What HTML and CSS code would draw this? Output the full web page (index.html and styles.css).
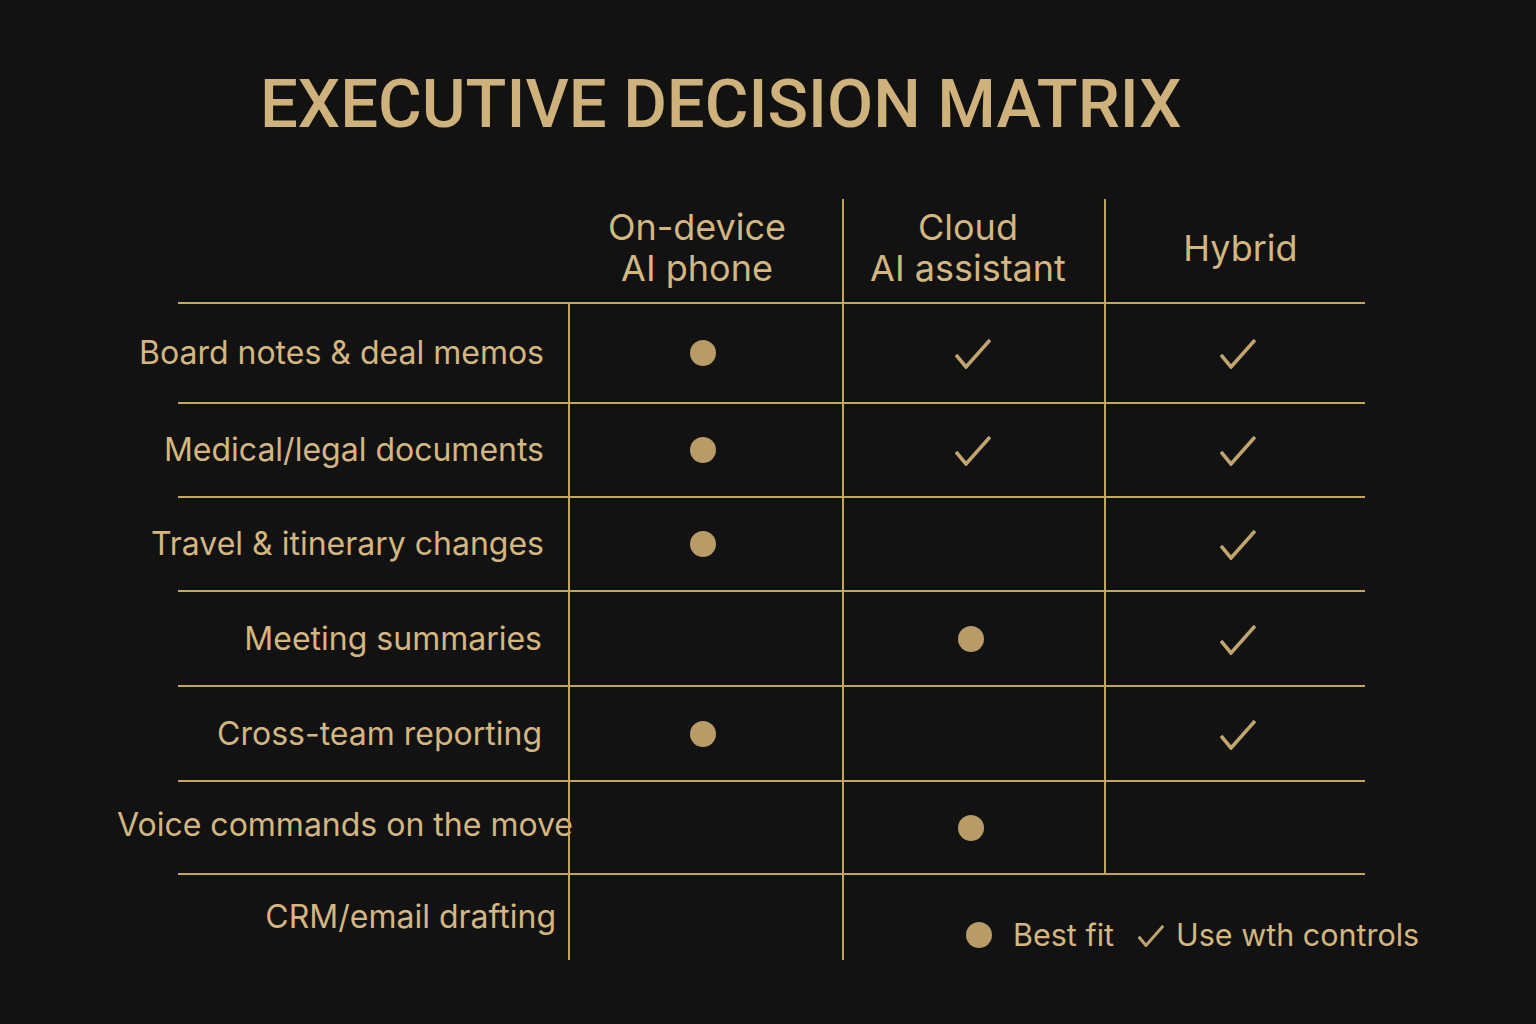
FILE: index.html
```html
<!DOCTYPE html>
<html lang="en">
<head>
<meta charset="utf-8">
<title>Executive Decision Matrix</title>
<link rel="stylesheet" href="styles.css">
</head>
<body>
<main class="page">
  <h1 class="title">EXECUTIVE DECISION MATRIX</h1>

  <section class="matrix">
    <div class="row row--head">
      <div class="cell cell--label"></div>
      <div class="cell cell--head head--one">On-device<br>AI phone</div>
      <div class="cell cell--head cell--line head--two">Cloud<br>AI assistant</div>
      <div class="cell cell--head cell--line head--three">Hybrid</div>
    </div>

    <div class="row row--h100">
      <div class="cell cell--label">Board notes &amp; deal memos</div>
      <div class="cell cell--line"><span class="dot"></span></div>
      <div class="cell cell--line"><svg class="check" viewBox="0 0 36 30"><polyline points="1,16 11,28 35,1"/></svg></div>
      <div class="cell cell--line cell--right"><svg class="check" viewBox="0 0 36 30"><polyline points="1,16 11,28 35,1"/></svg></div>
    </div>

    <div class="row row--h94">
      <div class="cell cell--label">Medical/legal documents</div>
      <div class="cell cell--line"><span class="dot"></span></div>
      <div class="cell cell--line"><svg class="check" viewBox="0 0 36 30"><polyline points="1,16 11,28 35,1"/></svg></div>
      <div class="cell cell--line cell--right"><svg class="check" viewBox="0 0 36 30"><polyline points="1,16 11,28 35,1"/></svg></div>
    </div>

    <div class="row row--h94">
      <div class="cell cell--label">Travel &amp; itinerary changes</div>
      <div class="cell cell--line"><span class="dot"></span></div>
      <div class="cell cell--line"></div>
      <div class="cell cell--line cell--right"><svg class="check" viewBox="0 0 36 30"><polyline points="1,16 11,28 35,1"/></svg></div>
    </div>

    <div class="row row--h95">
      <div class="cell cell--label label--tight">Meeting summaries</div>
      <div class="cell cell--line"></div>
      <div class="cell cell--line"><span class="dot"></span></div>
      <div class="cell cell--line cell--right"><svg class="check" viewBox="0 0 36 30"><polyline points="1,16 11,28 35,1"/></svg></div>
    </div>

    <div class="row row--h95">
      <div class="cell cell--label label--tight">Cross-team reporting</div>
      <div class="cell cell--line"><span class="dot"></span></div>
      <div class="cell cell--line"></div>
      <div class="cell cell--line cell--right"><svg class="check" viewBox="0 0 36 30"><polyline points="1,16 11,28 35,1"/></svg></div>
    </div>

    <div class="row row--h93">
      <div class="cell cell--label label--wide">Voice commands on the move</div>
      <div class="cell cell--line"></div>
      <div class="cell cell--line"><span class="dot"></span></div>
      <div class="cell cell--line"></div>
    </div>

    <div class="row row--last">
      <div class="cell cell--label label--mid">CRM/email drafting</div>
      <div class="cell cell--line"></div>
      <div class="cell cell--line cell--legend">
        <div class="legend">
          <span class="legend-item"><span class="dot dot--legend"></span>Best fit</span>
          <span class="legend-item"><svg class="check check--legend" viewBox="0 0 36 30"><polyline points="1,16 11,28 35,1"/></svg>Use wth controls</span>
        </div>
      </div>
    </div>
  </section>
</main>
</body>
</html>
```

FILE: styles.css
```css
html, body {
  margin: 0;
  padding: 0;
  background: #121212;
}

.page {
  width: 1536px;
  height: 1024px;
  box-sizing: border-box;
  padding-top: 71px;
  background: #121212;
  color: #d3b680;
  font-family: "Inter", "Liberation Sans", sans-serif;
  overflow: hidden;
}

.title {
  margin: 0 0 0 260px;
  font-family: "Roboto", "Liberation Sans", sans-serif;
  font-weight: 500;
  font-size: 67px;
  line-height: 67px;
  height: 67px;
  letter-spacing: 0;
  color: #cfb27b;
  white-space: nowrap;
}

.matrix {
  margin: 61px 0 0 178px;
  width: 1187px;
}

.row {
  display: grid;
  grid-template-columns: 390px 274px 262px 261px;
  border-top: 2px solid #c4a55c;
  box-sizing: border-box;
}

.row--head {
  border-top: none;
  height: 103px;
}

.row--h100 { height: 100px; }
.row--h94 { height: 94px; }
.row--h95 { height: 95px; }
.row--h93 { height: 93px; }
.row--last { height: 87px; }

.cell {
  display: flex;
  align-items: center;
  justify-content: center;
  box-sizing: border-box;
  min-width: 0;
}

.cell--line {
  border-left: 2px solid #c4a55c;
}

.cell--head {
  text-align: center;
  font-size: 36px;
  line-height: 41px;
  padding-bottom: 6px;
}

.head--one { padding-right: 16px; }
.head--two { padding-right: 12px; }
.head--three { padding-left: 10px; padding-bottom: 4px; }

.cell--label {
  justify-content: flex-end;
  padding-right: 24px;
  font-size: 32px;
  line-height: 40px;
  white-space: nowrap;
  overflow: visible;
}

.label--tight { padding-right: 26px; }
.label--wide { padding-right: 0; margin-right: -5px; padding-bottom: 6px; }
.label--mid { padding-right: 12px; padding-bottom: 2px; }

.dot {
  display: block;
  width: 26px;
  height: 26px;
  border-radius: 50%;
  background: #b89b67;
  margin-right: 6px;
}

.check {
  width: 36px;
  height: 30px;
  margin-right: 2px;
  margin-top: 2px;
  fill: none;
  stroke: #c1a46e;
  stroke-width: 3.6;
}

.cell--right .check {
  margin-right: 0;
  margin-left: 5px;
}

.cell--legend {
  grid-column: 3 / span 2;
  align-items: flex-start;
  justify-content: flex-start;
  padding: 40px 0 0 122px;
  overflow: visible;
}

.legend {
  display: flex;
  align-items: center;
  gap: 24px;
  white-space: nowrap;
  font-size: 30.5px;
  line-height: 40px;
}

.legend-item {
  display: flex;
  align-items: center;
}

.dot--legend {
  margin-right: 21px;
}

.check--legend {
  width: 26px;
  height: 22px;
  margin: 2px 12px 0 0;
  stroke-width: 4.2;
}
```
